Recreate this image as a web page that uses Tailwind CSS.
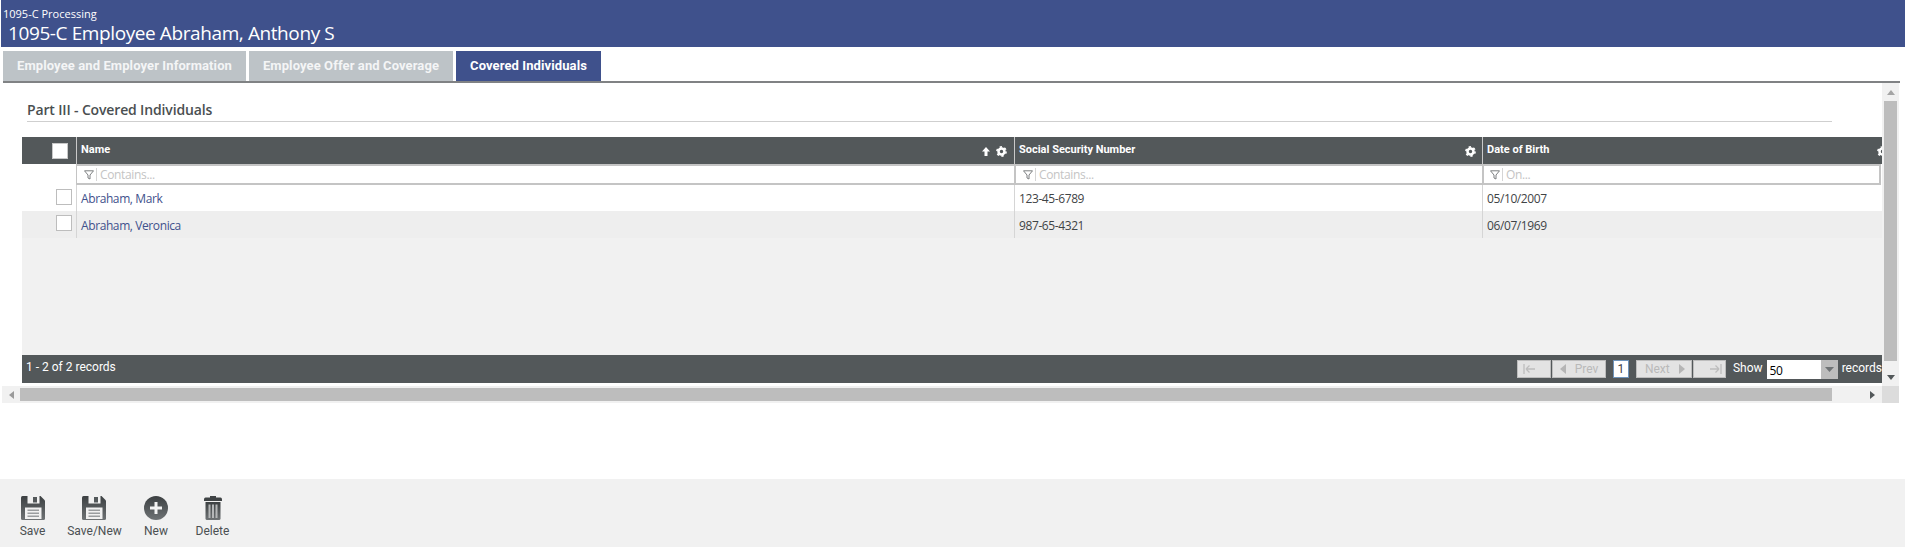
<!DOCTYPE html>
<html>
<head>
<meta charset="utf-8">
<script src="https://cdn.jsdelivr.net/npm/@tailwindcss/browser@4"></script>
</head>
<body class="bg-white overflow-hidden font-['Roboto',sans-serif] text-[#3f4446]">
<svg width="0" height="0" class="absolute">
  <defs>
    <linearGradient id="g" x1="0" y1="0" x2="0" y2="1"><stop offset="0" stop-color="#3c4042"/><stop offset="1" stop-color="#6f7375"/></linearGradient>
    <symbol id="gear" viewBox="0 0 24 24"><circle cx="12" cy="12" r="6.500" fill="none" stroke="#fff" stroke-width="5.500"/><circle cx="12" cy="12" r="10" fill="none" stroke="#fff" stroke-width="3.500" stroke-dasharray="5 5.470"/></symbol>
    <symbol id="disk" viewBox="0 0 24 24"><path fill="url(#g)" d="M0 1.500Q0 0 1.500 0H19.500L24 4.500V22.500Q24 24 22.500 24H1.500Q0 24 0 22.500z"/><path fill="#f1f1f1" d="M6.500 0H18.500V7.500H6.500z"/><path fill="#53585a" d="M12 1H16V6.500H12z"/><path fill="#f1f1f1" d="M4 11.500H20.500V23H4z"/><path fill="#9a9d9f" d="M6.500 13.500H18V15H6.500zM6.500 16.500H18V18H6.500zM6.500 19.500H18V21H6.500z"/></symbol>
    <symbol id="filt" viewBox="0 0 10 10"><path d="M.5.800h9L6 5v4L4 8V5z" fill="none" stroke="#7c7f81"/></symbol>
  </defs>
</svg>
<div class="w-[1905px] h-[547px] flex flex-col">
  <header class="h-[47px] ml-px bg-[#3f518c] text-white font-['Open_Sans',sans-serif] shrink-0">
    <div class="text-[11px] leading-[13px] pt-[7px] pl-[2px]">1095-C Processing</div>
    <div class="text-[19px] leading-[24px] pl-[7px] pt-px tracking-[-0.4px]">1095-C Employee Abraham, Anthony S</div>
  </header>
  <nav class="mt-[4px] ml-[3px] w-[1897px] h-[32px] flex gap-[3px] border-b-2 border-[#808284] shrink-0 text-[13px] font-bold text-white">
    <div class="w-[243px] h-[30px] bg-[#bdc3c7] flex items-center justify-center tracking-[0.1px] text-[#f4f5f6]">Employee and Employer Information</div>
    <div class="w-[204px] h-[30px] bg-[#bdc3c7] flex items-center justify-center tracking-[0.1px] text-[#f4f5f6]">Employee Offer and Coverage</div>
    <div class="w-[145px] h-[30px] bg-[#3f518c] flex items-center justify-center tracking-[0.1px]">Covered Individuals</div>
  </nav>
  <section class="ml-[2px] w-[1897px] h-[320px] flex flex-col shrink-0">
    <div class="h-[303px] flex">
      <div class="w-[1880px] overflow-hidden bg-white">
        <div class="ml-[25px] w-[1805px] h-[39px] border-b border-[#cfcfcf] pt-[19px] text-[14px] leading-[16px] font-semibold font-['Open_Sans',sans-serif] text-[#4a4f51] tracking-[-0.15px]">Part III - Covered Individuals</div>
        <div class="ml-[20px] mt-[15px] w-[1860px] h-[246px] flex flex-col bg-[#f1f1f1]">
          <div class="grid grid-cols-[54px_938px_468px_1fr] h-[27px] bg-[#53585a] text-white text-[11px] font-bold">
            <div class="flex justify-center items-center pl-[22px]"><span class="w-[16px] h-[16px] bg-white border border-[#c8c8c8] block"></span></div>
            <div class="border-l border-[#c9c9c9] pl-[4px] pt-[5px] pr-[7px] flex justify-between">
              <span>Name</span>
              <span class="flex items-center gap-[6px] mt-[1px] h-[16px]">
                <svg width="8" height="9" viewBox="0 0 8 9"><path d="M4 0 8 4.500H5.500V9h-3V4.500H0z" fill="#fff"/></svg>
                <svg width="11" height="11"><use href="#gear"/></svg>
              </span>
            </div>
            <div class="border-l border-[#c9c9c9] pl-[4px] pt-[5px] pr-[6px] flex justify-between">
              <span>Social Security Number</span>
              <svg class="mt-[4px]" width="11" height="11"><use href="#gear"/></svg>
            </div>
            <div class="border-l border-[#c9c9c9] pl-[4px] pt-[5px] flex justify-between">
              <span>Date of Birth</span>
              <svg class="mt-[4px] -mr-[6px]" width="11" height="11"><use href="#gear"/></svg>
            </div>
          </div>
          <div class="grid grid-cols-[54px_938px_468px_1fr] grid-rows-[21px] h-[21px] bg-white text-[12px] leading-[14px] text-[#c4c4c4] font-['Open_Sans',sans-serif] tracking-[-0.35px]">
            <div></div>
            <div class="border-2 border-l-[1px] border-r-0 border-[#c4c4c4] flex items-center pl-[7px] gap-[2px]">
              <svg width="10" height="10"><use href="#filt"/></svg><span class="w-px h-[13px] bg-[#d5d5d5]"></span><span class="ml-px pt-[1px]">Contains...</span>
            </div>
            <div class="border-2 border-r-0 border-[#c4c4c4] flex items-center pl-[7px] gap-[2px]">
              <svg width="10" height="10"><use href="#filt"/></svg><span class="w-px h-[13px] bg-[#d5d5d5]"></span><span class="ml-px pt-[1px]">Contains...</span>
            </div>
            <div class="w-[399px] border-2 border-[#c4c4c4] flex items-center pl-[6px] gap-[2px]">
              <svg width="10" height="10"><use href="#filt"/></svg><span class="w-px h-[13px] bg-[#d5d5d5]"></span><span class="ml-px pt-[1px]">On...</span>
            </div>
          </div>
          <div class="grid grid-cols-[54px_938px_468px_1fr] h-[26px] bg-white text-[12px] items-stretch font-['Open_Sans',sans-serif] tracking-[-0.4px]">
            <div class="flex justify-end pr-[4px] pt-[4px]"><span class="w-[16px] h-[16px] bg-white border border-[#bdbdbd] block"></span></div>
            <div class="border-l border-[#d5d5d5] pl-[4px] pt-[1px] flex items-center text-[#3f518c]">Abraham, Mark</div>
            <div class="border-l border-[#d5d5d5] pl-[4px] pt-[1px] flex items-center">123-45-6789</div>
            <div class="border-l border-[#d5d5d5] pl-[4px] pt-[1px] flex items-center">05/10/2007</div>
          </div>
          <div class="grid grid-cols-[54px_938px_468px_1fr] h-[27px] bg-[#eeeeee] text-[12px] items-stretch font-['Open_Sans',sans-serif] tracking-[-0.4px]">
            <div class="flex justify-end pr-[4px] pt-[4px]"><span class="w-[16px] h-[16px] bg-white border border-[#bdbdbd] block"></span></div>
            <div class="border-l border-[#d5d5d5] pl-[4px] pt-[2px] flex items-center text-[#3f518c]">Abraham, Veronica</div>
            <div class="border-l border-[#d5d5d5] pl-[4px] pt-[2px] flex items-center">987-65-4321</div>
            <div class="border-l border-[#d5d5d5] pl-[4px] pt-[2px] flex items-center">06/07/1969</div>
          </div>
          <div class="flex-1"></div>
        </div>
        <div class="ml-[20px] w-[1860px] h-[28px] -mt-[28px] bg-[#53585a] text-white text-[12px] relative flex items-center justify-between pl-[4px]">
          <span class="-mt-[4px]">1 - 2 of 2 records</span>
          <div class="flex items-center text-[#b9b9b9] whitespace-nowrap w-[365px] shrink-0 overflow-hidden">
            <div class="w-[34px] h-[18px] bg-[#e3e3e3] border border-[#bdbdbd] flex items-center justify-start pl-[5px]">
              <svg width="12" height="10" viewBox="0 0 12 10"><path d="M1 0v10M3 5l3.500-3.500M3 5l3.500 3.500M3 5h9" fill="none" stroke="#bdbdbd" stroke-width="1.300"/></svg>
            </div>
            <div class="ml-px w-[55px] h-[18px] bg-[#e3e3e3] border border-[#bdbdbd] flex items-center pl-[7px] gap-[9px]">
              <svg width="6" height="10" viewBox="0 0 6 10"><path d="M6 0v10L0 5z" fill="#b5b5b5"/></svg><span>Prev</span>
            </div>
            <div class="ml-[7px] w-[16px] h-[18px] bg-white border border-[#6f94bb] text-[#3f4446] flex items-center justify-center">1</div>
            <div class="ml-[7px] w-[57px] h-[18px] bg-[#e3e3e3] border border-[#bdbdbd] flex items-center pl-[8px] gap-[9px]">
              <span>Next</span><svg width="6" height="10" viewBox="0 0 6 10"><path d="M0 0v10l6-5z" fill="#b5b5b5"/></svg>
            </div>
            <div class="ml-px w-[33px] h-[18px] bg-[#e3e3e3] border border-[#bdbdbd] flex items-center justify-end pr-[3px]">
              <svg width="12" height="10" viewBox="0 0 12 10"><path d="M11 0v10M9 5 5.500 1.500M9 5 5.500 8.500M9 5H0" fill="none" stroke="#bdbdbd" stroke-width="1.300"/></svg>
            </div>
            <span class="ml-[7px] text-white -mt-[2px]">Show</span>
            <div class="ml-[4px] w-[72px] h-[19px] flex bg-white text-black">
              <span class="flex-1 pl-[3px] pt-[2px] font-['Open_Sans',sans-serif] tracking-[-0.3px]">50</span>
              <span class="w-[17px] bg-[#bdbdbd] flex items-center justify-center"><svg width="9" height="5" viewBox="0 0 9 5"><path d="M0 0h9L4.500 5z" fill="#6f7375"/></svg></span>
            </div>
            <span class="ml-[4px] text-white -mt-[2px]">records</span>
          </div>
        </div>
      </div>
      <div class="w-[17px] h-full bg-[#f1f1f1] flex flex-col items-center shrink-0">
        <div class="h-[18px] flex items-center justify-center"><svg width="8" height="5" viewBox="0 0 8 5"><path d="M4 0 8 5H0z" fill="#a5a5a5"/></svg></div>
        <div class="w-[13px] h-[260px] bg-[#bdbdbd]"></div>
        <div class="h-[25px] flex items-center justify-center pt-[7px]"><svg width="8" height="5" viewBox="0 0 8 5"><path d="M0 0h8L4 5z" fill="#53585a"/></svg></div>
      </div>
    </div>
    <div class="h-[17px] bg-[#f1f1f1] flex items-center">
      <div class="w-[18px] flex justify-center pl-px"><svg width="5" height="8" viewBox="0 0 5 8"><path d="M5 0v8L0 4z" fill="#9a9a9a"/></svg></div>
      <div class="w-[1812px] h-[13px] bg-[#bdbdbd] -mt-px"></div>
      <div class="w-[50px] flex justify-end pr-[7px]"><svg width="5" height="8" viewBox="0 0 5 8"><path d="M0 0v8l5-4z" fill="#53585a"/></svg></div>
      <div class="w-[17px] h-full bg-[#dcdcdc]"></div>
    </div>
  </section>
  <footer class="mt-[76px] h-[68px] bg-[#f1f1f1] flex text-[12px] text-[#4b5052] shrink-0 relative">
    <div class="flex items-start pt-[17px]">
      <div class="ml-[19px] w-[27px] flex flex-col items-center">
        <svg width="24" height="24"><use href="#disk"/></svg>
        <span class="mt-[4px] leading-[14px]">Save</span>
      </div>
      <div class="ml-[21px] w-[55px] flex flex-col items-center">
        <svg class="-ml-[2px]" width="24" height="24"><use href="#disk"/></svg>
        <span class="mt-[4px] leading-[14px]">Save/New</span>
      </div>
      <div class="ml-[22px] w-[24px] flex flex-col items-center">
        <svg width="24" height="24" viewBox="0 0 24 24"><circle cx="12" cy="12" r="12" fill="url(#g)"/><path d="M10.500 6h3v4.500H18v3h-4.500V18h-3v-4.500H6v-3h4.500z" fill="#f4f4f4"/></svg>
        <span class="mt-[4px] leading-[14px]">New</span>
      </div>
      <div class="ml-[28px] w-[33px] flex flex-col items-center">
        <svg width="18" height="24" viewBox="0 0 18 24"><path fill="#3f4345" d="M6 0h6v1.500h4.500Q18 1.500 18 3.500V5H0V3.500Q0 1.500 1.500 1.500H6z"/><path fill="url(#g)" d="M1.500 6h15v16.500q0 1.500-1.500 1.500H3q-1.500 0-1.500-1.500z"/><path fill="#b5b7b8" d="M4.500 8.500h2V22h-2zM8 8.500h2V22H8zM11.500 8.500h2V22h-2z"/></svg>
        <span class="mt-[4px] leading-[14px]">Delete</span>
      </div>
    </div>
  </footer>
</div>
</body>
</html>
